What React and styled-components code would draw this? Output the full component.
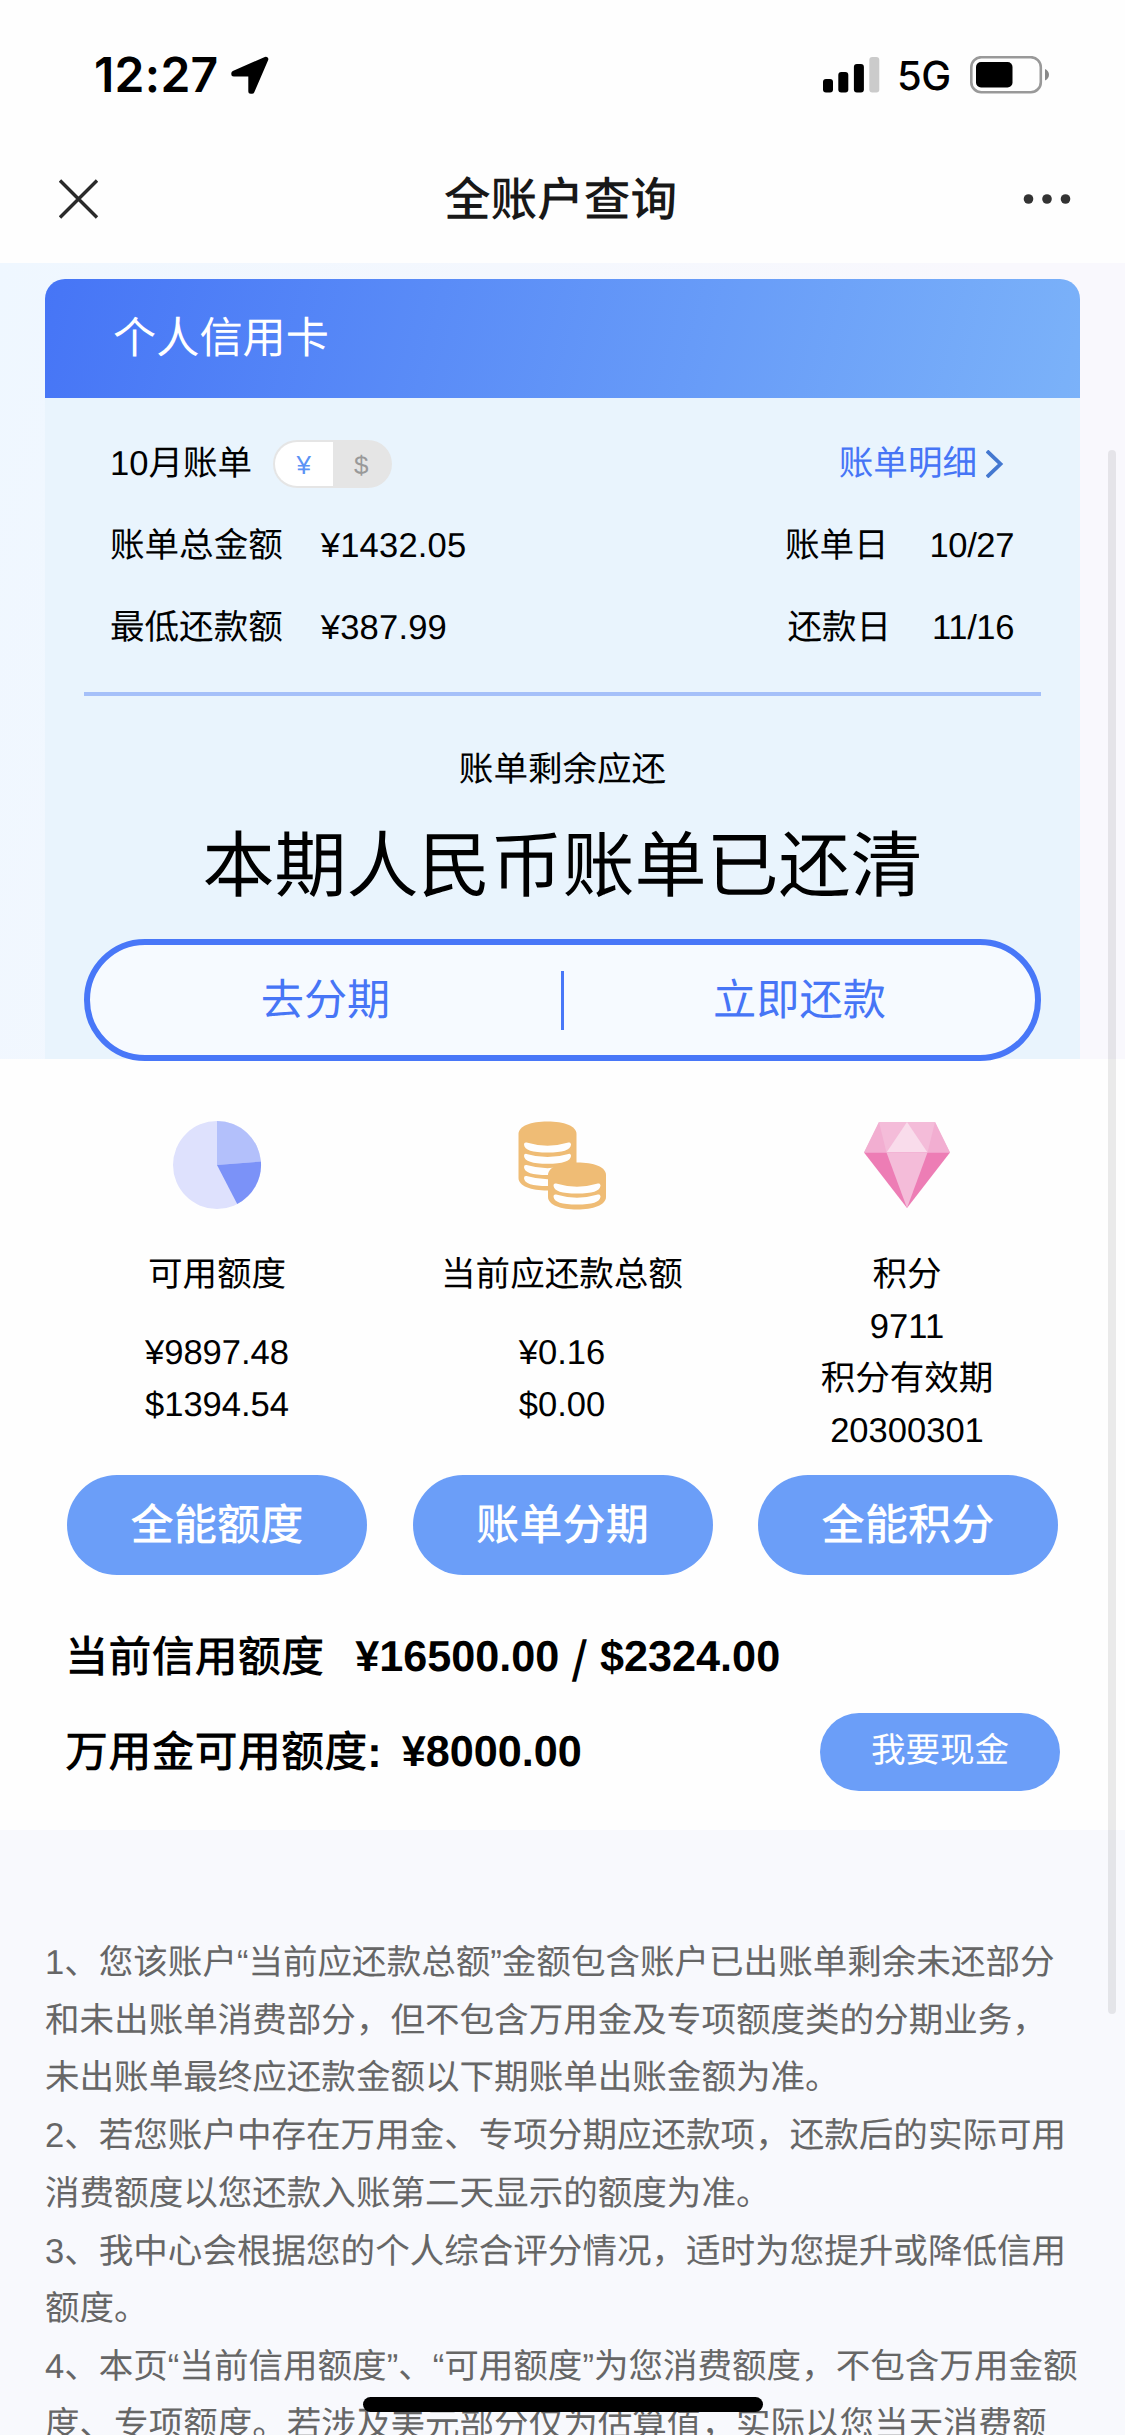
import styled, { createGlobalStyle } from 'styled-components';

const GlobalStyle = createGlobalStyle`
    * {
        box-sizing: border-box;
    }

    body {
        margin: 0;
        background-color: #f8f9fd;
        font-family: "Liberation Sans", "Noto Sans CJK SC", sans-serif;
        color: #000;
        text-rendering: geometricPrecision;
    }
`

const Page = styled.div`
    position: relative;
    width: 1125px;
    height: 2435px;
    overflow: hidden;
`

const StatusBar = styled.div`
    height: 150px;
    padding: 0 76px 0 94px;
    display: flex;
    align-items: flex-start;
    background-color: #fefefe;
`

const Time = styled.span`
    width: 137px;
    margin-top: 45px;
    font-family: Inter, sans-serif;
    font-size: 48px;
    font-weight: 600;
    line-height: 60px;
    letter-spacing: 0.3px;
    white-space: nowrap;
`

const LocationIcon = styled.svg`
    margin-top: 56px;
`

const SignalIcon = styled.svg`
    margin-top: 57px;
    margin-left: auto;
`

const Network = styled.span`
    flex: none;
    width: 87px;
    padding-left: 17px;
    margin-top: 51px;
    font-family: Inter, sans-serif;
    font-size: 40px;
    font-weight: 500;
    line-height: 50px;
    letter-spacing: -0.6px;
`

const BatteryIcon = styled.svg`
    margin-top: 56px;
    margin-left: 2px;
`

const NavBar = styled.div`
    height: 113px;
    padding: 0 54px 15px 59px;
    display: flex;
    align-items: center;
    justify-content: space-between;
    background-color: #fefefe;
`

const NavTitle = styled.h1`
    margin: 1px 0 0;
    padding-right: 1px;
    font-size: 46.6px;
    font-weight: 500;
    line-height: 60px;
    color: #181818;
`

const CardArea = styled.div`
    height: 796px;
    padding: 16px 45px 0;
    background: linear-gradient(105deg, #eff7ff, #f9f8fd 75%);
`

const CardHeader = styled.div`
    height: 119px;
    padding: 0 0 7px 68px;
    display: flex;
    align-items: center;
    border-radius: 20px 20px 0 0;
    background: linear-gradient(105deg, #4675f6, #7bb2f9);
    font-size: 43.2px;
    color: #fff;
`

const CardBody = styled.div`
    height: 661px;
    padding: 25px 39px 0;
    background-color: #e9f4fd;
`

const BillRow = styled.div`
    height: 82px;
    padding: 0 27px 0 26px;
    display: flex;
    align-items: center;
    font-size: 34.56px;
    line-height: 50px;
`

const Label = styled.span`
    margin-right: ${(props) => props.$gap || 0}px;
`

const Money = styled.span`
    letter-spacing: 0.2px;
`

const RightSide = styled.div`
    margin-left: auto;
`

const DateText = styled.span`
    letter-spacing: -0.4px;
`

const Switch = styled.div`
    width: 119px;
    height: 48px;
    margin-left: 21px;
    padding: 2px;
    display: flex;
    border-radius: 24px;
    background-color: #e5e5e5;
`

const Currency = styled.span`
    width: 58px;
    height: 44px;
    border-radius: 22px 0 0 22px;
    background-color: ${(props) => (props.$active ? '#fff' : 'transparent')};
    color: ${(props) => (props.$active ? '#5b93f5' : '#999')};
    font-size: 26px;
    line-height: 46px;
    text-align: center;
`

const DetailLink = styled.div`
    margin-left: auto;
    margin-right: 10px;
    display: flex;
    align-items: center;
    gap: 9px;
    color: #4675f6;
`

const Divider = styled.div`
    height: 4px;
    margin-top: 23px;
    background-color: #a5c0f9;
`

const RemainTitle = styled.p`
    margin: 49px 0 0;
    font-size: 34.56px;
    line-height: 50px;
    text-align: center;
`

const RemainText = styled.p`
    margin: 22px 0 0;
    font-size: 72px;
    line-height: 100px;
    text-align: center;
`

const Actions = styled.div`
    position: relative;
    height: 122px;
    margin-top: 22px;
    display: flex;
    align-items: center;
    border: 6px solid #4877f8;
    border-radius: 61px;
    background-color: #f6faff;
`

const Action = styled.div`
    flex: 1;
    padding-top: 2px;
    font-size: 43.2px;
    line-height: 60px;
    text-align: center;
    color: #4675f6;
`

const ActionLine = styled.div`
    width: 3px;
    height: 59px;
    background-color: #4877f8;
`

const Summary = styled.div`
    height: 771px;
    padding: 61px 45px 0;
    background-color: #fefefe;
`

const Columns = styled.div`
    display: flex;
    margin-left: -0.5px;
`

const Column = styled.div`
    width: 345px;
    height: 355px;
    display: flex;
    flex-direction: column;
    align-items: center;
    font-size: 34.56px;
    line-height: 52px;
`

const ColumnIcon = styled.svg`
    margin-right: 1px;
    margin-bottom: 39px;
`

const Values = styled.div`
    margin-top: ${(props) => (props.$spaced ? 26 : 0)}px;
    display: flex;
    flex-direction: column;
    align-items: center;
`

const Buttons = styled.div`
    display: flex;
    justify-content: space-between;
    padding: 0 22px;
`

const Button = styled.div`
    width: 300px;
    height: 100px;
    border-radius: 50px;
    background-color: #6b9ef8;
    color: #fff;
    font-size: 43.2px;
    font-weight: 500;
    line-height: 102px;
    text-align: center;
`

const LimitRow = styled.div`
    height: ${(props) => props.$height}px;
    padding: 0 20px;
    display: flex;
    align-items: center;
    font-size: 43.2px;
    font-weight: 500;
`

const LimitLabel = styled.span`
    margin-bottom: 7px;
`

const Amount = styled.span`
    margin-left: ${(props) => props.$left}px;
    font-weight: 700;
    line-height: 50px;
`

const Slash = styled.span`
    margin: 0 12px;
    font-family: "Noto Sans CJK SC", sans-serif;
    font-weight: 700;
    line-height: 1px;
    vertical-align: -3px;
`

const CashButton = styled.div`
    width: 240px;
    height: 78px;
    margin-left: auto;
    border-radius: 39px;
    background-color: #6b9ef8;
    color: #fff;
    font-size: 34.56px;
    font-weight: 400;
    line-height: 76px;
    text-align: center;
`

const Notes = styled.div`
    padding: 105px 0 0 45px;
    font-size: 34.56px;
    line-height: 57.7px;
    color: #666;
    white-space: nowrap;
`

const Note = styled.p`
    margin: 0;
`

const ScrollThumb = styled.div`
    position: absolute;
    top: 450px;
    right: 9px;
    width: 8px;
    height: 1564px;
    border-radius: 4px;
    background-color: rgba(0, 0, 0, 0.08);
`

const HomeIndicator = styled.div`
    position: absolute;
    left: 363px;
    bottom: 23px;
    width: 400px;
    height: 15px;
    border-radius: 8px;
    background-color: #000;
`

const PieIcon = () => (
    <ColumnIcon width="90" height="90" viewBox="0 0 90 90">
        <circle cx="45" cy="45" r="44" fill="#dee1fd" />
        <path d="M45 45V1A44 44 0 0 1 88.9 41.5Z" fill="#b3c0fb" />
        <path d="M45 45L88.9 41.5A44 44 0 0 1 65.2 84Z" fill="#7b92f8" />
    </ColumnIcon>
);

const CoinsIcon = () => (
    <ColumnIcon width="90" height="90" viewBox="0 0 90 90">
        <path d="M1.5 14C1.5 6 14 1.5 30.5 1.5S59.5 6 59.5 14V58C59.5 66 47 70.5 30.5 70.5S1.5 66 1.5 58Z" fill="#efbc75" />
        <g fill="#fefefe" stroke="#fefefe" strokeWidth="4" strokeLinejoin="round">
            <path d="M9 24.5Q30.5 31 52 24.5Q51.5 30.5 30.5 30.5T9 24.5Z" />
            <path d="M9 35.8Q30.5 42.3 52 35.8Q51.5 41.8 30.5 41.8T9 35.8Z" />
            <path d="M9 47Q30.5 53.5 52 47Q51.5 53 30.5 53T9 47Z" />
            <path d="M9 58Q30.5 64.5 52 58Q51.5 64 30.5 64T9 58Z" />
        </g>
        <path d="M31 55C31 47 43 42.5 60 42.5S89 47 89 55V77C89 85 76 89.5 60 89.5S31 85 31 77Z" fill="#efbc75" />
        <g fill="#fefefe" stroke="#fefefe" strokeWidth="4" strokeLinejoin="round">
            <path d="M38.5 65.5Q60 72 81.5 65.5Q81 71.5 60 71.5T38.5 65.5Z" />
            <path d="M38.5 76.5Q60 83 81.5 76.5Q81 82.5 60 82.5T38.5 76.5Z" />
        </g>
    </ColumnIcon>
);

const DiamondIcon = () => (
    <ColumnIcon width="90" height="90" viewBox="0 0 90 90">
        <path d="M17 2H73L88 32.5H2Z" fill="#f4bcd9" />
        <path d="M17 2L24.5 32.5H2ZM73 2L65.5 32.5H88Z" fill="#f2aed1" />
        <path d="M45 2L65.5 32.5H24.5Z" fill="#f9dceb" />
        <path d="M2 32.5H88L45 88Z" fill="#ed7db5" />
        <path d="M24.5 32.5H65.5L45 88Z" fill="#f4bcd9" />
    </ColumnIcon>
);

const notes = [
    '1、您该账户“当前应还款总额”金额包含账户已出账单剩余未还部分',
    '和未出账单消费部分，但不包含万用金及专项额度类的分期业务，',
    '未出账单最终应还款金额以下期账单出账金额为准。',
    '2、若您账户中存在万用金、专项分期应还款项，还款后的实际可用',
    '消费额度以您还款入账第二天显示的额度为准。',
    '3、我中心会根据您的个人综合评分情况，适时为您提升或降低信用',
    '额度。',
    '4、本页“当前信用额度”、“可用额度”为您消费额度，不包含万用金额',
    '度、专项额度。若涉及美元部分仅为估算值，实际以您当天消费额',
];

const App = () => {
    return (
        <Page>
            <GlobalStyle />
            <StatusBar>
                <Time>12:27</Time>
                <LocationIcon width="39" height="39" viewBox="0 0 39 39">
                    <path
                        d="M34.8 3.2L2.8 17.2L2.8 18L19.8 18L19.8 35.2L21 35.2Z"
                        stroke="#000"
                        strokeWidth="5"
                        strokeLinejoin="round"
                    />
                </LocationIcon>
                <SignalIcon width="57" height="36" viewBox="0 0 57 36">
                    <rect x="0" y="22" width="10" height="13.5" rx="3" />
                    <rect x="15.3" y="15" width="10" height="20.5" rx="3" />
                    <rect x="30.9" y="7" width="10" height="28.5" rx="3" />
                    <rect x="46.3" y="0" width="10" height="35.5" rx="3" fill="#cbcbcb" />
                </SignalIcon>
                <Network>5G</Network>
                <BatteryIcon width="80" height="38" viewBox="0 0 80 38">
                    <rect x="2.3" y="1.2" width="69.5" height="35" rx="10" fill="none" stroke="#999" strokeWidth="2.6" />
                    <rect x="7" y="6" width="36.5" height="25.5" rx="5" />
                    <path d="M76 13Q80 15 80 18.7T76 24.5Z" fill="#888" />
                </BatteryIcon>
            </StatusBar>
            <NavBar>
                <svg width="40" height="40" viewBox="0 0 40 40">
                    <path d="M1 1.5L38 38.5M38 1.5L1 38.5" stroke="#2a2a2a" strokeWidth="3.4" />
                </svg>
                <NavTitle>全账户查询</NavTitle>
                <svg width="48" height="10" viewBox="0 0 48 10" fill="#333">
                    <circle cx="5.5" cy="5" r="4.8" />
                    <circle cx="24" cy="5" r="4.8" />
                    <circle cx="42.5" cy="5" r="4.8" />
                </svg>
            </NavBar>
            <CardArea>
                <CardHeader>个人信用卡</CardHeader>
                <CardBody>
                    <BillRow>
                        <Label>10月账单</Label>
                        <Switch>
                            <Currency $active>¥</Currency>
                            <Currency>$</Currency>
                        </Switch>
                        <DetailLink>
                            <span>账单明细</span>
                            <svg width="18" height="28" viewBox="0 0 18 28">
                                <path d="M1 1L14.5 14L1 27" fill="none" stroke="#4478d0" strokeWidth="3.8" />
                            </svg>
                        </DetailLink>
                    </BillRow>
                    <BillRow>
                        <Label $gap={38}>账单总金额</Label>
                        <Money>¥1432.05</Money>
                        <RightSide>
                            <Label $gap={41}>账单日</Label>
                            <DateText>10/27</DateText>
                        </RightSide>
                    </BillRow>
                    <BillRow>
                        <Label $gap={38}>最低还款额</Label>
                        <Money>¥387.99</Money>
                        <RightSide>
                            <Label $gap={41}>还款日</Label>
                            <DateText>11/16</DateText>
                        </RightSide>
                    </BillRow>
                    <Divider />
                    <RemainTitle>账单剩余应还</RemainTitle>
                    <RemainText>本期人民币账单已还清</RemainText>
                    <Actions>
                        <Action>去分期</Action>
                        <ActionLine />
                        <Action>立即还款</Action>
                    </Actions>
                </CardBody>
            </CardArea>
            <Summary>
                <Columns>
                    <Column>
                        <PieIcon />
                        <span>可用额度</span>
                        <Values $spaced>
                            <span>¥9897.48</span>
                            <span>$1394.54</span>
                        </Values>
                    </Column>
                    <Column>
                        <CoinsIcon />
                        <span>当前应还款总额</span>
                        <Values $spaced>
                            <span>¥0.16</span>
                            <span>$0.00</span>
                        </Values>
                    </Column>
                    <Column>
                        <DiamondIcon />
                        <span>积分</span>
                        <Values>
                            <span>9711</span>
                            <span>积分有效期</span>
                            <span>20300301</span>
                        </Values>
                    </Column>
                </Columns>
                <Buttons>
                    <Button>全能额度</Button>
                    <Button>账单分期</Button>
                    <Button>全能积分</Button>
                </Buttons>
                <LimitRow $height={164}>
                    <LimitLabel>当前信用额度</LimitLabel>
                    <Amount $left={31}>
                        ¥16500.00<Slash>/</Slash>$2324.00
                    </Amount>
                </LimitRow>
                <LimitRow $height={26}>
                    <LimitLabel>
                        万用金可用额度<b>:</b>
                    </LimitLabel>
                    <Amount $left={20}>¥8000.00</Amount>
                    <CashButton>我要现金</CashButton>
                </LimitRow>
            </Summary>
            <Notes>
                {notes.map((line) => (
                    <Note key={line}>{line}</Note>
                ))}
            </Notes>
            <ScrollThumb />
            <HomeIndicator />
        </Page>
    );
};

export default App;
